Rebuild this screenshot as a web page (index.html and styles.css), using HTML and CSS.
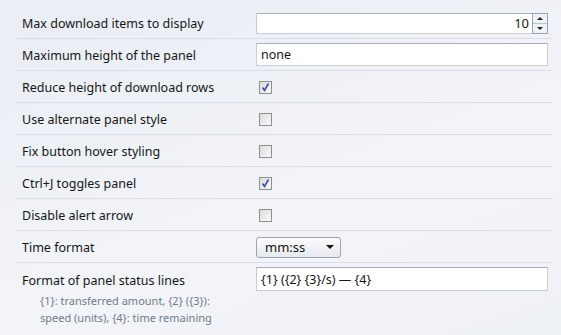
FILE: index.html
```html
<!DOCTYPE html>
<html lang="en">
<head>
  <meta charset="UTF-8">
  <title>Download panel options</title>
  <link rel="stylesheet" href="styles.css">
</head>
<body>
  <div class="prefs">
    <div class="row">
      <div class="label">Max download items to display</div>
      <div class="control">
        <div class="field number">
          <span class="value">10</span>
          <span class="spin">
            <span class="arrow up"></span>
            <span class="arrow down"></span>
          </span>
        </div>
      </div>
    </div>
    <div class="row">
      <div class="label">Maximum height of the panel</div>
      <div class="control"><div class="field text">none</div></div>
    </div>
    <div class="row">
      <div class="label">Reduce height of download rows</div>
      <div class="control"><span class="check on"><svg width="11" height="11" viewBox="0 0 11 11"><path d="M2.5 5.5 L4.5 8.5 L8.5 1.5" fill="none" stroke="#3b55a8" stroke-width="1.6"/></svg></span></div>
    </div>
    <div class="row">
      <div class="label">Use alternate panel style</div>
      <div class="control"><span class="check"></span></div>
    </div>
    <div class="row">
      <div class="label">Fix button hover styling</div>
      <div class="control"><span class="check"></span></div>
    </div>
    <div class="row">
      <div class="label">Ctrl+J toggles panel</div>
      <div class="control"><span class="check on"><svg width="11" height="11" viewBox="0 0 11 11"><path d="M2.5 5.5 L4.5 8.5 L8.5 1.5" fill="none" stroke="#3b55a8" stroke-width="1.6"/></svg></span></div>
    </div>
    <div class="row">
      <div class="label">Disable alert arrow</div>
      <div class="control"><span class="check"></span></div>
    </div>
    <div class="row">
      <div class="label">Time format</div>
      <div class="control">
        <div class="select">
          <span>mm:ss</span>
          <span class="caret"></span>
        </div>
      </div>
    </div>
    <div class="row last">
      <div class="label">
        Format of panel status lines
        <div class="help">{1}: transferred amount, {2} ({3}):<br>speed (units), {4}: time remaining</div>
      </div>
      <div class="control"><div class="field text tall">{1} ({2} {3}/s) — {4}</div></div>
    </div>
  </div>
</body>
</html>
```

FILE: styles.css
```css
body { margin: 0; font-family: "Noto Sans", sans-serif; font-size: 12.5px; color: #161616; background: linear-gradient(160deg, #e9edf4 0%, #f2f4f8 60%, #eef1f6 100%); height: 335px; overflow: hidden; }
.prefs { margin: 7px 9px 0 16px; }
.row { display: flex; align-items: center; height: 31px; border-bottom: 1px solid #d9dee6; }
.row.last { border-bottom: none; align-items: flex-start; height: auto; padding-top: 4px; }
.label { width: 234px; padding: 2px 0 0 6px; box-sizing: border-box; width: 240px; }
.row.last .label { padding-top: 5px; }
.control { flex: 1; padding-right: 4px; display: flex; align-items: center; }
.help { color: #6f7b8b; font-size: 11px; line-height: 17px; margin: 3px 0 0 18px; }
.field { background: #fff; border: 1px solid #c9ced6; border-top-color: #abb0b8; height: 21px; box-sizing: border-box; display: flex; align-items: center; flex: 1; }
.field.text { padding-left: 4px; height: 23px; }
.field.tall { height: 24px; }
.number { justify-content: flex-end; margin-top: 1px; }
.number .value { padding-right: 3px; font-size: 13px; }
.spin { width: 16px; height: 21px; margin: -1px -1px -1px 0; border: 1px solid #9aa3b1; box-sizing: border-box; display: flex; flex-direction: column; background: #eef1f5; }
.arrow { flex: 1; display: flex; align-items: center; justify-content: center; }
.arrow.up { border-bottom: 1px solid #b9c0cb; }
.arrow.up::after { content: ""; border: 3px solid transparent; border-bottom: 3px solid #222; border-top: 0; }
.arrow.down::after { content: ""; border: 3px solid transparent; border-top: 3px solid #222; border-bottom: 0; }
.check { width: 13px; height: 13px; box-sizing: border-box; border: 1px solid #8e8f8f; background: linear-gradient(135deg, #dcdcdc, #f9f9f9); margin: 2px 0 0 3px; display: flex; align-items: center; justify-content: center; }
.select { width: 85px; height: 21px; box-sizing: border-box; border: 1px solid #9ca5b4; border-radius: 3px; background: linear-gradient(#fbfbfc, #e6e9ee); display: flex; align-items: center; justify-content: space-between; padding: 0 6px 0 8px; margin-top: 1px; font-size: 13px; }
.caret { border: 4px solid transparent; border-top: 4px solid #111; border-bottom: 0; }
```
